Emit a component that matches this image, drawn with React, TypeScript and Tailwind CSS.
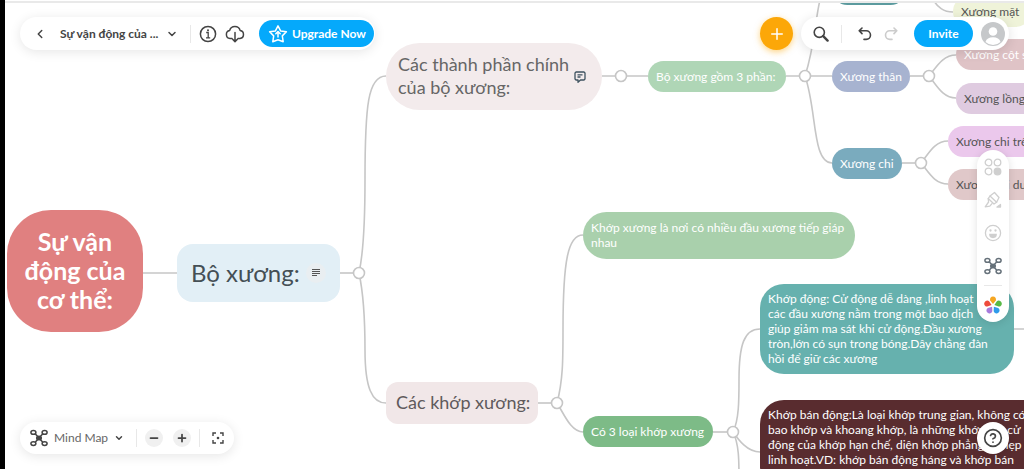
import type { ReactNode } from 'react';
import { ChevronDown, ChevronLeft, CircleHelp, Minus, Plus } from 'lucide-react';

interface MapNode {
  id: string;
  x: number;
  y: number;
  width: number;
  height: number;
  lines: string[];
  tone: string;
  icon?: 'note' | 'comment';
}

const SMALL = 'rounded-[24px] px-2 text-[12px] leading-[15px]';

const NODES: MapNode[] = [
  { id: 'root', x: 7, y: 210, width: 136, height: 122, lines: ['Sự vận', 'động của', 'cơ thể:'], tone: 'rounded-[44px] justify-center text-center bg-[#e08080] text-white text-[25px] leading-[29px] font-bold' },
  { id: 'bones', x: 177, y: 244, width: 163, height: 58, lines: ['Bộ xương:'], tone: 'rounded-2xl px-[14px] bg-[#e2eff6] text-[#454f55] text-[24px] leading-[29px]', icon: 'note' },
  { id: 'parts', x: 386, y: 43, width: 216, height: 67, lines: ['Các thành phần chính', 'của bộ xương:'], tone: 'rounded-[34px] px-3 bg-[#f3ebec] text-[#666] text-[18px] leading-[23px]', icon: 'comment' },
  { id: 'joints', x: 386, y: 382, width: 152, height: 42, lines: ['Các khớp xương:'], tone: 'rounded-xl px-[10px] bg-[#f1e7e8] text-[#5f5a5c] text-[18px] leading-[23px]' },
  { id: 'three-parts', x: 648, y: 61, width: 138, height: 31, lines: ['Bộ xương gồm 3 phần:'], tone: `${SMALL} bg-[#afd6b6] text-white` },
  { id: 'head', x: 832, y: -26, width: 74, height: 31, lines: [], tone: `${SMALL} bg-[#5b9a9e] text-white` },
  { id: 'body', x: 832, y: 61, width: 78, height: 31, lines: ['Xương thân'], tone: `${SMALL} bg-[#a7b3d0] text-white` },
  { id: 'limbs', x: 832, y: 148, width: 70, height: 31, lines: ['Xương chi'], tone: `${SMALL} bg-[#7aabbe] text-white` },
  { id: 'face', x: 953, y: -4, width: 78, height: 31, lines: ['Xương mặt'], tone: `${SMALL} bg-[#eff3d9] text-[#555]` },
  { id: 'spine', x: 956, y: 39, width: 100, height: 31, lines: ['Xương cột sống'], tone: `${SMALL} bg-[#dfc3c6] text-white` },
  { id: 'ribs', x: 956, y: 83, width: 110, height: 31, lines: ['Xương lồng ngực'], tone: `${SMALL} bg-[#dfcbe0] text-[#555]` },
  { id: 'upper', x: 948, y: 126, width: 110, height: 31, lines: ['Xương chi trên'], tone: `${SMALL} bg-[#ebc8ec] text-[#555]` },
  { id: 'lower', x: 948, y: 169, width: 110, height: 31, lines: ['Xương chi dưới'], tone: `${SMALL} bg-[#e0c8c9] text-[#555]` },
  { id: 'joint-def', x: 583, y: 212, width: 272, height: 47, lines: ['Khớp xương là nơi có nhiều đầu xương tiếp giáp', 'nhau'], tone: `${SMALL} bg-[#a9d0ac] text-white` },
  { id: 'three-joints', x: 583, y: 416, width: 130, height: 31, lines: ['Có 3 loại khớp xương'], tone: `${SMALL} bg-[#7dbb87] text-white` },
  {
    id: 'mobile', x: 760, y: 284, width: 254, height: 90,
    lines: ['Khớp động: Cử động dễ dàng ,linh hoạt', 'các đầu xương nằm trong một bao dịch', 'giúp giảm ma sát khi cử động.Đầu xương', 'tròn,lớn có sụn trong bóng.Dây chằng đàn', 'hồi để giữ các xương'],
    tone: `${SMALL} bg-[#66b1ae] text-white`,
  },
  {
    id: 'semi', x: 760, y: 400, width: 290, height: 90,
    lines: ['Khớp bán động:Là loại khớp trung gian, không có', 'bao khớp và khoang khớp, là những khớp mà cử', 'động của khớp hạn chế, diện khớp phẳng và hẹp', 'linh hoạt.VD: khớp bán động háng và khớp bán', ''],
    tone: `${SMALL} bg-[#592c2f] text-white`,
  },
];

const EDGES = [
  'M143 273H177', 'M340 273H359', 'M602 76H648', 'M786 76H832', 'M910 76H929', 'M902 163H921',
  'M538 403H557', 'M713 432H733', 'M1014 329H1400',
  'M359 273C364 250 365 220 365 180C365 105 368 76 386 76',
  'M359 273C364 296 365 320 365 350C365 388 372 403 386 403',
  'M557 403C563 380 563 360 563 330C563 260 568 235 583 235',
  'M557 403C564 414 571 432 583 432',
  'M733 432C739 420 739 400 739 380C739 345 744 329 760 329',
  'M733 432C738 439 747 452 760 452',
  'M733 432C739 444 739 460 739 480',
  'M805 76C815 45 815 20 820 0',
  'M805 76C817 110 812 163 832 163',
  'M929 76C937 66 943 55 956 55',
  'M929 76C937 86 943 98 956 98',
  'M921 163C928 155 934 141 948 141',
  'M921 163C928 171 934 184 948 184',
  'M933 0C938 7 943 12 953 12',
];

const JOINTS = [[359, 273], [621, 76], [805, 76], [929, 76], [921, 163], [557, 403], [733, 432]];

const PETALS = ['#f5a623', '#58b947', '#2f9bea', '#a77bdc', '#ee4b3c'];

function MindMapIcon({ className }: { className?: string }) {
  return (
    <svg viewBox="0 0 18 18" className={className} fill="none" stroke="currentColor" strokeWidth="1.5" aria-hidden="true">
      <ellipse cx="3.4" cy="3.4" rx="2.5" ry="1.8" />
      <ellipse cx="14.6" cy="3.4" rx="2.5" ry="1.8" />
      <ellipse cx="3.4" cy="14.6" rx="2.5" ry="1.8" />
      <ellipse cx="14.6" cy="14.6" rx="2.5" ry="1.8" />
      <path d="M5.2 4.8L9 9M12.8 4.8L9 9M5.2 13.2L9 9M12.8 13.2L9 9" />
      <ellipse cx="9" cy="9" rx="2.3" ry="1.8" fill="currentColor" />
    </svg>
  );
}

function InfoIcon() {
  return (
    <svg viewBox="0 0 18 18" className="w-[18px] h-[18px]" fill="none" stroke="currentColor" strokeWidth="1.5" aria-hidden="true">
      <circle cx="9" cy="9" r="7.6" />
      <path d="M7.2 7.5H9.2V12.7M7 12.8H11.2" strokeWidth="1.3" />
      <circle cx="9" cy="5.2" r="1" fill="currentColor" stroke="none" />
    </svg>
  );
}

function DownloadCloudIcon() {
  return (
    <svg viewBox="0 0 20 18" className="w-5 h-[18px]" fill="none" stroke="currentColor" strokeWidth="1.5" strokeLinecap="round" strokeLinejoin="round" aria-hidden="true">
      <path d="M7 13.5H5A4 4 0 0 1 4.6 5.6A5.5 5.5 0 0 1 15.2 5.6A4 4 0 0 1 15 13.5H13" />
      <path d="M10 7.5V16.5M7.6 14.2L10 16.6L12.4 14.2" />
    </svg>
  );
}

function StarUpIcon() {
  return (
    <svg viewBox="0 0 20 20" className="w-5 h-5" fill="none" stroke="currentColor" strokeWidth="1.5" strokeLinecap="round" strokeLinejoin="round" aria-hidden="true">
      <path d="M10 1.8L12.6 6.9L18.4 7.8L14.3 11.9L15.2 17.7L10 15.7L4.8 17.7L5.7 11.9L1.6 7.8L7.4 6.9Z" />
      <path d="M10 13V7.8M7.8 9.8L10 7.6L12.2 9.8" />
    </svg>
  );
}

function SearchIcon() {
  return (
    <svg viewBox="0 0 16 16" className="w-4 h-4" fill="none" stroke="currentColor" aria-hidden="true">
      <circle cx="6.3" cy="6.3" r="5.1" strokeWidth="1.6" />
      <path d="M10.2 10.2L14.6 14.6" strokeWidth="2.4" strokeLinecap="round" />
    </svg>
  );
}

function UndoIcon({ className }: { className?: string }) {
  return (
    <svg viewBox="0 0 14 14" className={className} fill="none" stroke="currentColor" strokeWidth="1.6" strokeLinecap="round" strokeLinejoin="round" aria-hidden="true">
      <path d="M4 1L1.2 3.8L4 6.6M1.5 3.8H8.2A4.3 4.3 0 0 1 8.2 12.4H6" />
    </svg>
  );
}

function AvatarIcon() {
  return (
    <svg viewBox="0 0 24 24" className="w-6 h-6" aria-hidden="true">
      <circle cx="12" cy="12" r="12" fill="#c6c8ca" />
      <circle cx="12" cy="9.5" r="4.3" fill="#fff" />
      <path d="M4.5 20A7.7 6 0 0 1 19.5 20A11 11 0 0 1 4.5 20Z" fill="#fff" />
    </svg>
  );
}

function ShapesIcon() {
  return (
    <svg viewBox="0 0 18 18" className="w-[18px] h-[18px]" fill="none" stroke="currentColor" strokeWidth="1.3" aria-hidden="true">
      <circle cx="4.5" cy="4.5" r="3.3" />
      <circle cx="13.5" cy="4.5" r="3.3" />
      <circle cx="4.5" cy="13.5" r="3.3" />
      <circle cx="13.5" cy="13.5" r="3.3" fill="currentColor" />
    </svg>
  );
}

function BrushIcon() {
  return (
    <svg viewBox="0 0 18 18" className="w-[18px] h-[18px]" fill="none" stroke="currentColor" strokeWidth="1.3" strokeLinejoin="round" strokeLinecap="round" aria-hidden="true">
      <path d="M10.5 1.5L15 6.5L12.6 11.2L10 13L4.2 7.6L6 5Z" />
      <path d="M6 5L12.6 11.2" />
      <path d="M4.2 7.6L4.6 11L1.2 15.8L5.8 15.2L8 12.6" />
      <path d="M13 16H16.5V13.5Z" fill="currentColor" />
    </svg>
  );
}

function SmileIcon() {
  return (
    <svg viewBox="0 0 18 18" className="w-[18px] h-[18px]" fill="none" stroke="currentColor" strokeWidth="1.3" aria-hidden="true">
      <circle cx="9" cy="9" r="7.6" />
      <path d="M5.8 10.3H12.2A3.2 3.2 0 0 1 5.8 10.3Z" fill="currentColor" />
      <circle cx="6.5" cy="6.5" r="0.5" fill="currentColor" />
      <circle cx="11.5" cy="6.5" r="0.5" fill="currentColor" />
    </svg>
  );
}

function FlowerIcon() {
  return (
    <svg viewBox="0 0 18 18" className="w-[18px] h-[18px]" aria-hidden="true">
      {PETALS.map((fill, i) => (
        <path key={fill} d="M9 8L6.2 4.5A3 3 0 1 1 11.8 4.5Z" fill={fill} transform={`rotate(${i * 72} 9 9.5)`} />
      ))}
    </svg>
  );
}

function NodeIcon({ kind }: { kind: 'note' | 'comment' }) {
  if (kind === 'note') {
    return (
      <span className="w-5 h-5 rounded-full bg-[#e9eef1] flex items-center justify-center">
        <svg viewBox="0 0 8 8" className="w-2 h-2" stroke="#555" strokeWidth="1" aria-hidden="true">
          <path d="M0 0.5H8M0 2.5H8M0 4.5H8M0 6.5H5" />
        </svg>
      </span>
    );
  }
  return (
    <svg viewBox="0 0 12 12" className="w-3 h-3" fill="none" stroke="#3f5360" strokeWidth="1.3" strokeLinejoin="round" aria-hidden="true">
      <path d="M2 1H10L11 2V8L10 9H6.5L4 11.2V9H2L1 8V2Z" />
      <path d="M3.5 3.8H8.5M3.5 6H6.5" />
    </svg>
  );
}

function IconButton({ label, className = '', children }: { label: string; className?: string; children: ReactNode }) {
  return (
    <button type="button" aria-label={label} className={`flex items-center justify-center shrink-0 ${className}`}>
      {children}
    </button>
  );
}

function Divider() {
  return <span className="w-px h-[18px] bg-[#e8e8e8] shrink-0" />;
}

function Canvas() {
  return (
    <main className="absolute inset-0 overflow-hidden">
      <svg className="absolute inset-0 w-full h-full" fill="none" stroke="#c6c6c6" strokeWidth="1.6" aria-hidden="true">
        {EDGES.map(d => <path key={d} d={d} />)}
        {JOINTS.map(([cx, cy]) => <circle key={`${cx}-${cy}`} cx={cx} cy={cy} r="5.5" fill="#fff" />)}
      </svg>
      {NODES.map(node => (
        <div
          key={node.id}
          className={`absolute flex items-center whitespace-nowrap ${node.tone}`}
          style={{ left: node.x, top: node.y, width: node.width, height: node.height }}
        >
          <div className="pb-px">
            {node.lines.map(line => <p key={line} className="min-h-[15px]">{line}</p>)}
          </div>
          {node.icon && (
            <span className={`flex-1 flex justify-end ${node.icon === 'comment' ? 'pr-1' : ''}`}>
              <NodeIcon kind={node.icon} />
            </span>
          )}
        </div>
      ))}
    </main>
  );
}

export default function App() {
  return (
    <div className="relative h-screen overflow-hidden bg-white border-l-[5px] border-black font-['Lato','Noto_Sans',sans-serif] text-[#444]">
      {/* Node coordinates start at the window edge, under the left border */}
      <div className="absolute inset-y-0 -left-[5px] right-0">
        <Canvas />
      </div>
      <div className="absolute inset-x-0 top-0 h-[3px] bg-white border-b-2 border-[#e9e9e9]" />

      {/* Floating controls */}
      <div className="absolute inset-0 flex flex-col justify-between px-[15px] pt-[17px] pb-[15px] pointer-events-none *:pointer-events-auto">
        <header className="flex justify-between items-center">
          <div className="h-[33px] flex items-center rounded-full bg-white pl-3 pr-px shadow-[0_2px_12px_rgba(0,0,0,0.1)]">
            <IconButton label="Back" className="w-4 h-6"><ChevronLeft className="w-[14px] h-[14px]" strokeWidth={2.5} /></IconButton>
            <button type="button" className="ml-3 flex items-center gap-2 text-[12px] leading-4 font-bold">
              Sự vận động của ...
              <ChevronDown className="w-3 h-3" strokeWidth={3} />
            </button>
            <span className="ml-3 mr-2 flex"><Divider /></span>
            <IconButton label="Info" className="w-[18px] h-[18px]"><InfoIcon /></IconButton>
            <IconButton label="Download" className="ml-2"><DownloadCloudIcon /></IconButton>
            <button type="button" className="ml-[14px] w-[115px] h-[27px] rounded-full bg-[#05a9fb] text-white text-[12px] font-bold flex items-center justify-center gap-1">
              <StarUpIcon />
              Upgrade Now
            </button>
          </div>

          <div className="flex items-center gap-2">
            <IconButton label="Add" className="w-[33px] h-[33px] rounded-full bg-[#fca708] text-white shadow-[0_2px_6px_rgba(252,167,8,0.5)]">
              <Plus className="w-[18px] h-[18px]" strokeWidth={2} />
            </IconButton>
            <div className="h-[33px] flex items-center rounded-full bg-white pl-3 pr-1 shadow-[0_2px_12px_rgba(0,0,0,0.12)]">
              <IconButton label="Search"><SearchIcon /></IconButton>
              <span className="ml-3 mr-4 flex"><Divider /></span>
              <IconButton label="Undo"><UndoIcon className="w-[14px] h-[14px]" /></IconButton>
              <IconButton label="Redo" className="ml-3 text-[#ccc]"><UndoIcon className="w-[14px] h-[14px] -scale-x-100" /></IconButton>
              <button type="button" className="ml-4 w-[59px] h-[27px] rounded-full bg-[#05a9fb] text-white text-[12px] font-bold">Invite</button>
              <IconButton label="Account" className="ml-2"><AvatarIcon /></IconButton>
            </div>
          </div>
        </header>

        <aside className="self-end w-8 flex flex-col items-center rounded-full bg-white pt-2 pb-2 text-[#cfcfcf] shadow-[0_1px_8px_rgba(0,0,0,0.12)]">
          <IconButton label="Shapes"><ShapesIcon /></IconButton>
          <IconButton label="Theme" className="mt-[15px]"><BrushIcon /></IconButton>
          <IconButton label="Stickers" className="mt-[15px]"><SmileIcon /></IconButton>
          <IconButton label="Layout" className="mt-[15px] text-[#66717a]"><MindMapIcon className="w-[18px] h-[18px]" /></IconButton>
          <span className="mt-[10px] w-[18px] h-px bg-[#e8e8e8]" />
          <IconButton label="Apps" className="mt-[10px]"><FlowerIcon /></IconButton>
        </aside>

        <footer className="flex justify-between items-center">
          <div className="h-8 flex items-center rounded-full bg-white px-[10px] shadow-[0_2px_12px_rgba(0,0,0,0.1)]">
            <button type="button" className="flex items-center gap-[6px] text-[12px] leading-4 text-[#666]">
              <MindMapIcon className="w-[18px] h-[18px] text-[#444]" />
              Mind Map
              <ChevronDown className="w-[10px] h-[10px] text-[#444]" strokeWidth={3.5} />
            </button>
            <span className="ml-3 mr-2 flex"><Divider /></span>
            <IconButton label="Zoom out" className="w-[18px] h-[18px] rounded-full bg-[#f0f0f0]"><Minus className="w-3 h-3" strokeWidth={3.5} /></IconButton>
            <IconButton label="Zoom in" className="ml-[10px] w-[18px] h-[18px] rounded-full bg-[#f0f0f0]"><Plus className="w-3 h-3" strokeWidth={3.5} /></IconButton>
            <span className="ml-2 mr-3 flex"><Divider /></span>
            <IconButton label="Fit to screen">
              <svg viewBox="0 0 12 12" className="w-3 h-3" fill="none" stroke="currentColor" strokeWidth="1.4" aria-hidden="true">
                <path d="M1 4V1H4M8 1H11V4M11 8V11H8M4 11H1V8" />
                <circle cx="6" cy="6" r="1.3" fill="currentColor" stroke="none" />
              </svg>
            </IconButton>
          </div>
          <IconButton label="Help" className="w-8 h-8 rounded-full bg-white shadow-[0_1px_8px_rgba(0,0,0,0.15)]">
            <CircleHelp className="w-5 h-5" strokeWidth={2} />
          </IconButton>
        </footer>
      </div>
    </div>
  );
}
